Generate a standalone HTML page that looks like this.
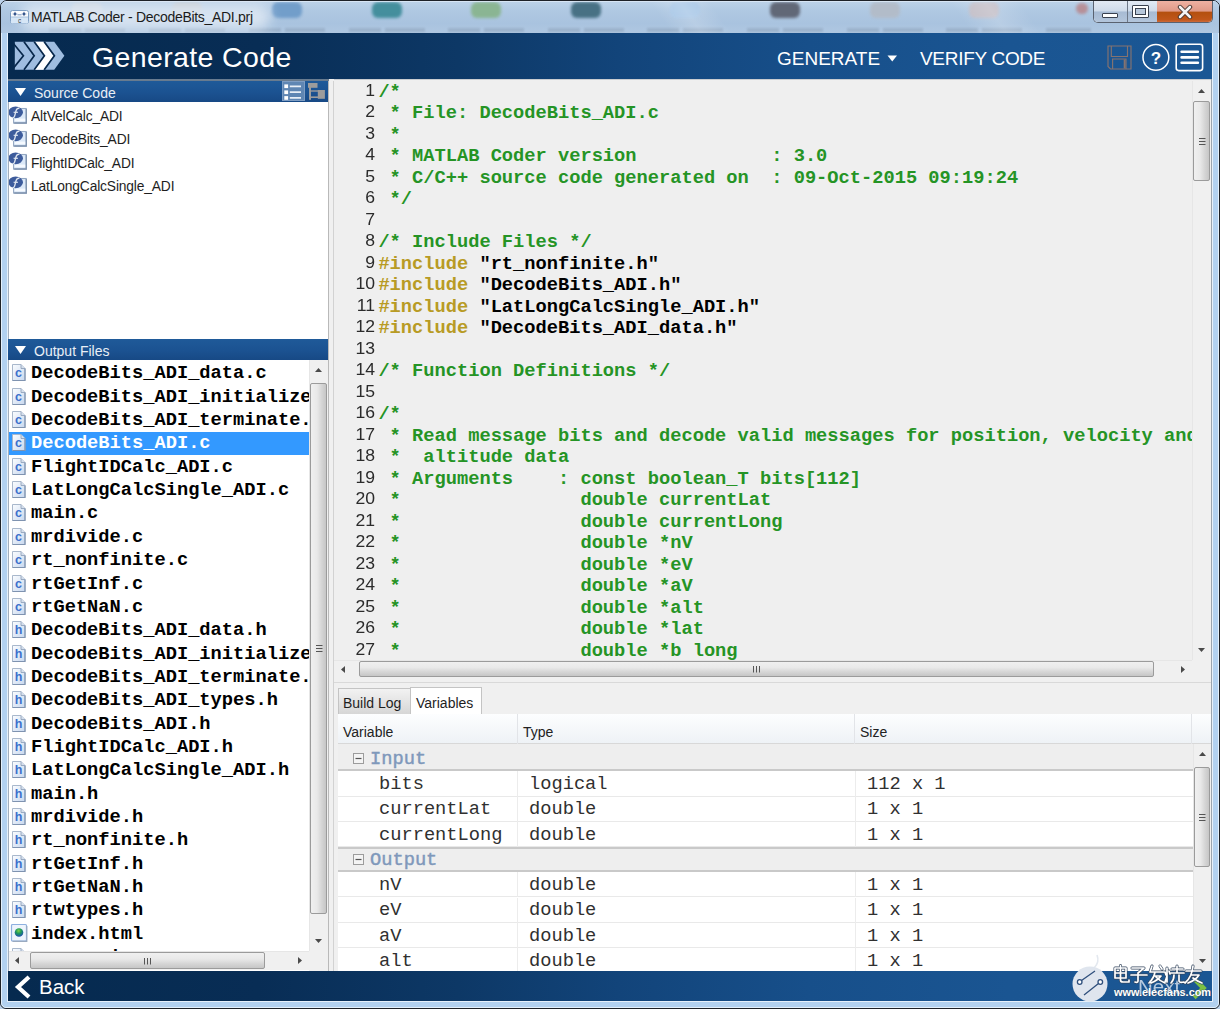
<!DOCTYPE html><html><head><meta charset="utf-8"><style>
*{margin:0;padding:0;box-sizing:border-box}
html,body{width:1220px;height:1009px;overflow:hidden;background:#bcd2ea;font-family:"Liberation Sans",sans-serif}
.a{position:absolute}
.t{position:absolute;white-space:pre;line-height:1}
.m{font-family:"Liberation Mono",monospace}
.b{font-weight:bold}
.cm{color:#259425}
.kw{color:#b89b24}
.ln{color:#2b2b2b;font-size:16px;text-align:right;width:50px;transform:scaleX(1.1);transform-origin:100% 50%}
.fi{position:absolute;width:14px;height:18px}
</style></head><body>
<div class="a" style="left:0;top:0;width:1220px;height:1009px;background:#b2d1f0;border:1px solid #1d2127;border-radius:7px 7px 6px 6px"></div>
<div class="a" style="left:1px;top:1px;width:1218px;height:1007px;border:1px solid #e3f0fc;border-radius:6px 6px 5px 5px"></div>
<div class="a" style="left:1px;top:1px;width:1218px;height:32px;border-radius:6px 6px 0 0;background:linear-gradient(to bottom,#bcd2e8 0,#afc8e2 10px,#a9c3df 22px,#afc7e1 32px)"></div>
<div class="a" style="left:7px;top:33px;width:1206px;height:969px;border:1px solid #e6f0fa"></div>
<div class="a" style="left:72px;top:2px;width:30px;height:16px;border-radius:6px;background:#c9d3de;opacity:.95;filter:blur(1.5px)"></div>
<div class="a" style="left:49px;top:28px;width:32px;height:3.5px;background:#8397ae;opacity:.4;filter:blur(1px)"></div>
<div class="a" style="left:85px;top:28px;width:40px;height:3.5px;background:#8397ae;opacity:.4;filter:blur(1px)"></div>
<div class="a" style="left:172px;top:2px;width:30px;height:16px;border-radius:6px;background:#c3c9cf;opacity:.95;filter:blur(1.5px)"></div>
<div class="a" style="left:149px;top:28px;width:32px;height:3.5px;background:#8397ae;opacity:.4;filter:blur(1px)"></div>
<div class="a" style="left:185px;top:28px;width:40px;height:3.5px;background:#8397ae;opacity:.4;filter:blur(1px)"></div>
<div class="a" style="left:272px;top:2px;width:30px;height:16px;border-radius:6px;background:#6f9cc9;opacity:.95;filter:blur(1.5px)"></div>
<div class="a" style="left:249px;top:28px;width:32px;height:3.5px;background:#8397ae;opacity:.4;filter:blur(1px)"></div>
<div class="a" style="left:285px;top:28px;width:40px;height:3.5px;background:#8397ae;opacity:.4;filter:blur(1px)"></div>
<div class="a" style="left:372px;top:2px;width:30px;height:16px;border-radius:6px;background:#3f8c9a;opacity:.95;filter:blur(1.5px)"></div>
<div class="a" style="left:349px;top:28px;width:32px;height:3.5px;background:#8397ae;opacity:.4;filter:blur(1px)"></div>
<div class="a" style="left:385px;top:28px;width:40px;height:3.5px;background:#8397ae;opacity:.4;filter:blur(1px)"></div>
<div class="a" style="left:471px;top:2px;width:30px;height:16px;border-radius:6px;background:#89b58f;opacity:.95;filter:blur(1.5px)"></div>
<div class="a" style="left:448px;top:28px;width:32px;height:3.5px;background:#8397ae;opacity:.4;filter:blur(1px)"></div>
<div class="a" style="left:484px;top:28px;width:40px;height:3.5px;background:#8397ae;opacity:.4;filter:blur(1px)"></div>
<div class="a" style="left:571px;top:2px;width:30px;height:16px;border-radius:6px;background:#436d80;opacity:.95;filter:blur(1.5px)"></div>
<div class="a" style="left:548px;top:28px;width:32px;height:3.5px;background:#8397ae;opacity:.4;filter:blur(1px)"></div>
<div class="a" style="left:584px;top:28px;width:40px;height:3.5px;background:#8397ae;opacity:.4;filter:blur(1px)"></div>
<div class="a" style="left:670px;top:2px;width:30px;height:16px;border-radius:6px;background:#a9c8e8;opacity:.95;filter:blur(1.5px)"></div>
<div class="a" style="left:647px;top:28px;width:32px;height:3.5px;background:#8397ae;opacity:.4;filter:blur(1px)"></div>
<div class="a" style="left:683px;top:28px;width:40px;height:3.5px;background:#8397ae;opacity:.4;filter:blur(1px)"></div>
<div class="a" style="left:770px;top:2px;width:30px;height:16px;border-radius:6px;background:#5d6372;opacity:.95;filter:blur(1.5px)"></div>
<div class="a" style="left:747px;top:28px;width:32px;height:3.5px;background:#8397ae;opacity:.4;filter:blur(1px)"></div>
<div class="a" style="left:783px;top:28px;width:40px;height:3.5px;background:#8397ae;opacity:.4;filter:blur(1px)"></div>
<div class="a" style="left:870px;top:2px;width:30px;height:16px;border-radius:6px;background:#b3bcc8;opacity:.95;filter:blur(1.5px)"></div>
<div class="a" style="left:847px;top:28px;width:32px;height:3.5px;background:#8397ae;opacity:.4;filter:blur(1px)"></div>
<div class="a" style="left:883px;top:28px;width:40px;height:3.5px;background:#8397ae;opacity:.4;filter:blur(1px)"></div>
<div class="a" style="left:969px;top:2px;width:30px;height:16px;border-radius:6px;background:#c4bec6;opacity:.95;filter:blur(1.5px)"></div>
<div class="a" style="left:946px;top:28px;width:32px;height:3.5px;background:#8397ae;opacity:.4;filter:blur(1px)"></div>
<div class="a" style="left:982px;top:28px;width:40px;height:3.5px;background:#8397ae;opacity:.4;filter:blur(1px)"></div>
<div class="a" style="left:660px;top:0;width:60px;height:33px;background:linear-gradient(to right,rgba(255,255,255,0),rgba(255,255,255,.18),rgba(255,255,255,0));transform:skewX(35deg)"></div>
<div class="a" style="left:960px;top:0;width:70px;height:33px;background:linear-gradient(to right,rgba(255,255,255,0),rgba(255,255,255,.18),rgba(255,255,255,0));transform:skewX(35deg)"></div>
<div class="a" style="left:20px;top:4px;width:250px;height:26px;border-radius:13px;background:#e2ebf5;opacity:.8;filter:blur(6px)"></div>
<div class="a" style="left:6px;top:0;width:1208px;height:1px;background:#1d2127"></div>
<div class="a" style="left:6px;top:1px;width:1208px;height:1px;background:#dfeaf6;opacity:.8"></div>
<div class="a" style="left:1076px;top:3px;width:12px;height:11px;border-radius:6px;background:#b88286;opacity:.8;filter:blur(1.5px)"></div>
<div class="a" style="left:1046px;top:28px;width:45px;height:3.5px;background:#8397ae;opacity:.4;filter:blur(1px)"></div>
<svg class="a" style="left:10px;top:10px" width="19" height="14" viewBox="0 0 19 14">
<rect x="0.5" y="0.5" width="18" height="13" rx="2" fill="#fbfcfe" stroke="#7d9ec4"/>
<rect x="1" y="7" width="17" height="6.5" rx="1" fill="#d6e6f6"/>
<path d="M1 7 H18" stroke="#9ab5d4" stroke-width="0.8"/>
<path d="M5 1.6 L5.9 3.4 L7.8 3.9 L5.9 4.4 L5 6.2 L4.1 4.4 L2.2 3.9 L4.1 3.4Z M14 1.6 L14.9 3.4 L16.8 3.9 L14.9 4.4 L14 6.2 L13.1 4.4 L11.2 3.9 L13.1 3.4Z" fill="#1f4380"/>
<path d="M7.5 4.8 H11.5" stroke="#5a7fb0" stroke-width="0.8"/>
<text x="9.5" y="12.6" font-size="6.5" font-family="Liberation Sans" text-anchor="middle" fill="#3a3a3a">c</text>
</svg>
<div class="t" style="left:31px;top:10px;font-size:14px;color:#1b1b1b;letter-spacing:-0.3px">MATLAB Coder - DecodeBits_ADI.prj</div>
<div class="a" style="left:1093px;top:1px;width:120px;height:22px;border:1px solid #5a6270;border-top:none;border-radius:0 0 5px 5px;overflow:hidden;background:#fff">
<div class="a" style="left:0;top:0;width:33px;height:22px;background:linear-gradient(to bottom,#e2eaf4 0,#cfdbea 45%,#a7bbd4 50%,#b4c6dc 100%)"></div>
<div class="a" style="left:33px;top:0;width:1px;height:22px;background:#6d7888"></div>
<div class="a" style="left:34px;top:0;width:29px;height:22px;background:linear-gradient(to bottom,#e2eaf4 0,#cfdbea 45%,#a7bbd4 50%,#b4c6dc 100%)"></div>
<div class="a" style="left:63px;top:0;width:56px;height:22px;background:linear-gradient(to bottom,#eeb1a2 0,#e09a88 45%,#b4500f 52%,#c0561a 85%,#d2744a 100%)"></div>
</div>
<div class="a" style="left:1102px;top:13px;width:16px;height:5px;background:#fff;border:1px solid #3a4250;border-radius:1px"></div>
<div class="a" style="left:1132px;top:5px;width:17px;height:13px;background:#fff;border:1px solid #3a4250;border-radius:1px"></div>
<div class="a" style="left:1135px;top:8px;width:11px;height:7px;background:#b7c7da;border:1px solid #3a4250"></div>
<svg class="a" style="left:1176px;top:4px" width="18" height="16" viewBox="0 0 18 16">
<path d="M4 3 L14 13 M14 3 L4 13" stroke="#40302c" stroke-width="4.4" stroke-linecap="round"/>
<path d="M4 3 L14 13 M14 3 L4 13" stroke="#f4f4f4" stroke-width="2.6" stroke-linecap="round"/>
</svg>
<div class="a" style="left:8px;top:33px;width:1204px;height:46px;background:linear-gradient(to right,#062a4f 0,#082d55 250px,#0d3866 450px,#12447a 610px,#174f8a 800px,#1a5592 1000px,#1b5794 1204px)"></div>
<div class="a" style="left:8px;top:79px;width:321px;height:2px;background:#687b8f"></div>
<svg class="a" style="left:14px;top:41px" width="52" height="30" viewBox="0 0 52 30">
<g transform="translate(0.8,0.8)">
<polygon points="0,0 39.4,0 49.6,14 39.4,28 0,28" fill="#9fbde0"/>
<polygon points="19.8,0 28.6,0 38.8,14 28.6,28 19.8,28 30,14" fill="#ffffff"/>
<g fill="none" stroke="#08284b" stroke-width="1.7">
<polyline points="-2,1 8.6,14 -2,27"/>
<polyline points="9.2,0 19.4,14 9.2,28"/>
<polyline points="19.4,0 29.6,14 19.4,28"/>
<polyline points="29.4,0 39.6,14 29.4,28"/>
</g>
</g></svg>
<div class="t" style="left:92px;top:43px;font-size:28.5px;color:#fff;letter-spacing:0.37px">Generate Code</div>
<div class="t" style="left:777px;top:49px;font-size:19px;color:#fff">GENERATE</div>
<svg class="a" style="left:887px;top:55px" width="11" height="7"><polygon points="0.5,0.5 10,0.5 5.25,6.5" fill="#fff"/></svg>
<div class="t" style="left:920px;top:49px;font-size:19px;color:#fff;letter-spacing:-0.3px">VERIFY CODE</div>
<svg class="a" style="left:1107px;top:45px" width="26" height="26" viewBox="0 0 26 26">
<g fill="none" stroke="#857370" stroke-width="1.15">
<path d="M1 1 H24 V24 H3.5 L1 21.5 Z"/>
<path d="M4.3 1 V11.5 H20.5 V1"/>
<path d="M5.6 24 V14 H19 V24"/>
</g>
<path d="M17.6 14.5 V23.5" stroke="#857370" stroke-width="1.8"/>
</svg>
<svg class="a" style="left:1141px;top:43px" width="29" height="29" viewBox="0 0 29 29">
<circle cx="14.9" cy="14.4" r="12.9" fill="none" stroke="#fff" stroke-width="1.5"/>
<text x="14.9" y="21" font-size="17" font-weight="bold" font-family="Liberation Sans" text-anchor="middle" fill="#fff">?</text>
</svg>
<svg class="a" style="left:1175px;top:43px" width="30" height="30" viewBox="0 0 30 30">
<rect x="1.2" y="1.2" width="26.4" height="26.4" rx="2.5" fill="none" stroke="#fff" stroke-width="1.6"/>
<path d="M6.6 8.7 H22.9 M6.6 14.4 H22.9 M6.6 19.8 H22.9" stroke="#fff" stroke-width="2.6" stroke-linecap="round"/>
</svg>
<div class="a" style="left:8px;top:81px;width:321px;height:21px;background:linear-gradient(to bottom,#1f5a99 0,#1b5291 55%,#174985 100%)"></div>
<svg class="a" style="left:15px;top:88px" width="12" height="9"><polygon points="0,0 11,0 5.5,8" fill="#fff"/></svg>
<div class="t" style="left:34px;top:85.6px;font-size:14px;color:#e9eff6">Source Code</div>
<div class="a" style="left:282px;top:81px;width:23px;height:20px;background:#5f86b3;border:1px solid #7d9cc2"></div>
<svg class="a" style="left:282px;top:81px" width="46" height="21" viewBox="0 0 46 21">
<g fill="#fff"><rect x="2.3" y="3.4" width="3.8" height="3.7"/><rect x="2.3" y="9.4" width="3.8" height="3.7"/><rect x="2.3" y="15.1" width="3.8" height="3.7"/></g>
<path d="M7.8 5.3 H19 M7.8 11.1 H19 M7.8 16.9 H19" stroke="#e8eef6" stroke-width="1.8"/>
<g fill="#9c9c9c"><rect x="26" y="2" width="9.5" height="4.8"/><rect x="27" y="2" width="2" height="16.8"/><rect x="29" y="9.3" width="7" height="1.4"/><rect x="29" y="15.4" width="7" height="1.6"/><rect x="35.8" y="9" width="7.1" height="8.8"/></g>
</svg>
<div class="a" style="left:8px;top:102px;width:321px;height:237px;background:#fff"></div>
<svg class="a" style="left:7px;top:106.0px" width="21" height="19" viewBox="0 0 21 19">
<rect x="6.6" y="2.5" width="12.6" height="14.6" fill="#dce9f8" stroke="#93a7c2" stroke-width="1.1"/>
<path d="M7.2 17 H19.3 V3" fill="none" stroke="#7f93ae" stroke-width="1.3"/>
<rect x="7.6" y="12.6" width="10.6" height="2.6" fill="#f6faff"/>
<ellipse cx="8.6" cy="6.35" rx="7.4" ry="5.8" fill="#3d5c9c"/>
<path d="M12.4 2.3 C10.6 1.9 9.6 2.8 9.2 4.2 L7.6 10.2 C7.3 11.4 6.6 11.8 5.4 11.6" stroke="#dfe6f0" stroke-width="1.35" fill="none"/>
<path d="M6.6 6.3 H10.9" stroke="#dfe6f0" stroke-width="1.2"/>
</svg>
<div class="t" style="left:31px;top:110.2px;font-size:13.8px;color:#1e1e1e;letter-spacing:-0.15px">AltVelCalc_ADI</div>
<svg class="a" style="left:7px;top:129.2px" width="21" height="19" viewBox="0 0 21 19">
<rect x="6.6" y="2.5" width="12.6" height="14.6" fill="#dce9f8" stroke="#93a7c2" stroke-width="1.1"/>
<path d="M7.2 17 H19.3 V3" fill="none" stroke="#7f93ae" stroke-width="1.3"/>
<rect x="7.6" y="12.6" width="10.6" height="2.6" fill="#f6faff"/>
<ellipse cx="8.6" cy="6.35" rx="7.4" ry="5.8" fill="#3d5c9c"/>
<path d="M12.4 2.3 C10.6 1.9 9.6 2.8 9.2 4.2 L7.6 10.2 C7.3 11.4 6.6 11.8 5.4 11.6" stroke="#dfe6f0" stroke-width="1.35" fill="none"/>
<path d="M6.6 6.3 H10.9" stroke="#dfe6f0" stroke-width="1.2"/>
</svg>
<div class="t" style="left:31px;top:133.4px;font-size:13.8px;color:#1e1e1e;letter-spacing:-0.15px">DecodeBits_ADI</div>
<svg class="a" style="left:7px;top:152.4px" width="21" height="19" viewBox="0 0 21 19">
<rect x="6.6" y="2.5" width="12.6" height="14.6" fill="#dce9f8" stroke="#93a7c2" stroke-width="1.1"/>
<path d="M7.2 17 H19.3 V3" fill="none" stroke="#7f93ae" stroke-width="1.3"/>
<rect x="7.6" y="12.6" width="10.6" height="2.6" fill="#f6faff"/>
<ellipse cx="8.6" cy="6.35" rx="7.4" ry="5.8" fill="#3d5c9c"/>
<path d="M12.4 2.3 C10.6 1.9 9.6 2.8 9.2 4.2 L7.6 10.2 C7.3 11.4 6.6 11.8 5.4 11.6" stroke="#dfe6f0" stroke-width="1.35" fill="none"/>
<path d="M6.6 6.3 H10.9" stroke="#dfe6f0" stroke-width="1.2"/>
</svg>
<div class="t" style="left:31px;top:156.6px;font-size:13.8px;color:#1e1e1e;letter-spacing:-0.15px">FlightIDCalc_ADI</div>
<svg class="a" style="left:7px;top:175.6px" width="21" height="19" viewBox="0 0 21 19">
<rect x="6.6" y="2.5" width="12.6" height="14.6" fill="#dce9f8" stroke="#93a7c2" stroke-width="1.1"/>
<path d="M7.2 17 H19.3 V3" fill="none" stroke="#7f93ae" stroke-width="1.3"/>
<rect x="7.6" y="12.6" width="10.6" height="2.6" fill="#f6faff"/>
<ellipse cx="8.6" cy="6.35" rx="7.4" ry="5.8" fill="#3d5c9c"/>
<path d="M12.4 2.3 C10.6 1.9 9.6 2.8 9.2 4.2 L7.6 10.2 C7.3 11.4 6.6 11.8 5.4 11.6" stroke="#dfe6f0" stroke-width="1.35" fill="none"/>
<path d="M6.6 6.3 H10.9" stroke="#dfe6f0" stroke-width="1.2"/>
</svg>
<div class="t" style="left:31px;top:179.8px;font-size:13.8px;color:#1e1e1e;letter-spacing:-0.15px">LatLongCalcSingle_ADI</div>
<div class="a" style="left:8px;top:339px;width:321px;height:21px;background:linear-gradient(to bottom,#1f5a99 0,#1b5291 55%,#174985 100%)"></div>
<svg class="a" style="left:15px;top:346px" width="12" height="9"><polygon points="0,0 11,0 5.5,8" fill="#fff"/></svg>
<div class="t" style="left:34px;top:343.6px;font-size:14px;color:#e9eff6">Output Files</div>
<div class="a" style="left:8px;top:360px;width:321px;height:611px;background:#fff"></div>
<div class="a" style="left:8px;top:360px;width:301px;height:591px;overflow:hidden">
<svg class="a" style="left:3px;top:3.3px" width="16" height="19" viewBox="0 0 16 19">
<defs><linearGradient id="pg0" x1="0" y1="0" x2="1" y2="1"><stop offset="0" stop-color="#fbfdff"/><stop offset="1" stop-color="#c8d8ef"/></linearGradient></defs>
<path d="M1.5 1.5 H10 L14 5.5 V17.5 H1.5 Z" fill="url(#pg0)" stroke="#a9b8cc" stroke-width="1"/>
<path d="M1.5 17.5 H14 V5.5" fill="none" stroke="#7f93b0" stroke-width="1.2"/>
<path d="M10 1.5 V5.5 H14" fill="#d5dfec" stroke="#8a9cb6" stroke-width="0.8"/>
<text x="7.6" y="13.6" font-size="12.5" font-weight="bold" font-family="Liberation Sans" text-anchor="middle" fill="#3d70cc">c</text></svg>
<div class="t m b" style="left:23px;top:4.3px;font-size:18.72px;color:#000">DecodeBits_ADI_data.c</div>
<svg class="a" style="left:3px;top:26.7px" width="16" height="19" viewBox="0 0 16 19">
<defs><linearGradient id="pg1" x1="0" y1="0" x2="1" y2="1"><stop offset="0" stop-color="#fbfdff"/><stop offset="1" stop-color="#c8d8ef"/></linearGradient></defs>
<path d="M1.5 1.5 H10 L14 5.5 V17.5 H1.5 Z" fill="url(#pg1)" stroke="#a9b8cc" stroke-width="1"/>
<path d="M1.5 17.5 H14 V5.5" fill="none" stroke="#7f93b0" stroke-width="1.2"/>
<path d="M10 1.5 V5.5 H14" fill="#d5dfec" stroke="#8a9cb6" stroke-width="0.8"/>
<text x="7.6" y="13.6" font-size="12.5" font-weight="bold" font-family="Liberation Sans" text-anchor="middle" fill="#3d70cc">c</text></svg>
<div class="t m b" style="left:23px;top:27.7px;font-size:18.72px;color:#000">DecodeBits_ADI_initialize.c</div>
<svg class="a" style="left:3px;top:50.0px" width="16" height="19" viewBox="0 0 16 19">
<defs><linearGradient id="pg2" x1="0" y1="0" x2="1" y2="1"><stop offset="0" stop-color="#fbfdff"/><stop offset="1" stop-color="#c8d8ef"/></linearGradient></defs>
<path d="M1.5 1.5 H10 L14 5.5 V17.5 H1.5 Z" fill="url(#pg2)" stroke="#a9b8cc" stroke-width="1"/>
<path d="M1.5 17.5 H14 V5.5" fill="none" stroke="#7f93b0" stroke-width="1.2"/>
<path d="M10 1.5 V5.5 H14" fill="#d5dfec" stroke="#8a9cb6" stroke-width="0.8"/>
<text x="7.6" y="13.6" font-size="12.5" font-weight="bold" font-family="Liberation Sans" text-anchor="middle" fill="#3d70cc">c</text></svg>
<div class="t m b" style="left:23px;top:51.0px;font-size:18.72px;color:#000">DecodeBits_ADI_terminate.c</div>
<div class="a" style="left:0;top:72.4px;width:301px;height:22.6px;background:#3399ff"></div>
<svg class="a" style="left:3px;top:73.4px" width="16" height="19" viewBox="0 0 16 19">
<defs><linearGradient id="pg3" x1="0" y1="0" x2="1" y2="1"><stop offset="0" stop-color="#fbfdff"/><stop offset="1" stop-color="#c8d8ef"/></linearGradient></defs>
<path d="M1.5 1.5 H10 L14 5.5 V17.5 H1.5 Z" fill="url(#pg3)" stroke="#a9b8cc" stroke-width="1"/>
<path d="M1.5 17.5 H14 V5.5" fill="none" stroke="#7f93b0" stroke-width="1.2"/>
<path d="M10 1.5 V5.5 H14" fill="#d5dfec" stroke="#8a9cb6" stroke-width="0.8"/>
<text x="7.6" y="13.6" font-size="12.5" font-weight="bold" font-family="Liberation Sans" text-anchor="middle" fill="#3d70cc">c</text></svg>
<div class="t m b" style="left:23px;top:74.4px;font-size:18.72px;color:#fff">DecodeBits_ADI.c</div>
<svg class="a" style="left:3px;top:96.7px" width="16" height="19" viewBox="0 0 16 19">
<defs><linearGradient id="pg4" x1="0" y1="0" x2="1" y2="1"><stop offset="0" stop-color="#fbfdff"/><stop offset="1" stop-color="#c8d8ef"/></linearGradient></defs>
<path d="M1.5 1.5 H10 L14 5.5 V17.5 H1.5 Z" fill="url(#pg4)" stroke="#a9b8cc" stroke-width="1"/>
<path d="M1.5 17.5 H14 V5.5" fill="none" stroke="#7f93b0" stroke-width="1.2"/>
<path d="M10 1.5 V5.5 H14" fill="#d5dfec" stroke="#8a9cb6" stroke-width="0.8"/>
<text x="7.6" y="13.6" font-size="12.5" font-weight="bold" font-family="Liberation Sans" text-anchor="middle" fill="#3d70cc">c</text></svg>
<div class="t m b" style="left:23px;top:97.7px;font-size:18.72px;color:#000">FlightIDCalc_ADI.c</div>
<svg class="a" style="left:3px;top:120.1px" width="16" height="19" viewBox="0 0 16 19">
<defs><linearGradient id="pg5" x1="0" y1="0" x2="1" y2="1"><stop offset="0" stop-color="#fbfdff"/><stop offset="1" stop-color="#c8d8ef"/></linearGradient></defs>
<path d="M1.5 1.5 H10 L14 5.5 V17.5 H1.5 Z" fill="url(#pg5)" stroke="#a9b8cc" stroke-width="1"/>
<path d="M1.5 17.5 H14 V5.5" fill="none" stroke="#7f93b0" stroke-width="1.2"/>
<path d="M10 1.5 V5.5 H14" fill="#d5dfec" stroke="#8a9cb6" stroke-width="0.8"/>
<text x="7.6" y="13.6" font-size="12.5" font-weight="bold" font-family="Liberation Sans" text-anchor="middle" fill="#3d70cc">c</text></svg>
<div class="t m b" style="left:23px;top:121.1px;font-size:18.72px;color:#000">LatLongCalcSingle_ADI.c</div>
<svg class="a" style="left:3px;top:143.4px" width="16" height="19" viewBox="0 0 16 19">
<defs><linearGradient id="pg6" x1="0" y1="0" x2="1" y2="1"><stop offset="0" stop-color="#fbfdff"/><stop offset="1" stop-color="#c8d8ef"/></linearGradient></defs>
<path d="M1.5 1.5 H10 L14 5.5 V17.5 H1.5 Z" fill="url(#pg6)" stroke="#a9b8cc" stroke-width="1"/>
<path d="M1.5 17.5 H14 V5.5" fill="none" stroke="#7f93b0" stroke-width="1.2"/>
<path d="M10 1.5 V5.5 H14" fill="#d5dfec" stroke="#8a9cb6" stroke-width="0.8"/>
<text x="7.6" y="13.6" font-size="12.5" font-weight="bold" font-family="Liberation Sans" text-anchor="middle" fill="#3d70cc">c</text></svg>
<div class="t m b" style="left:23px;top:144.4px;font-size:18.72px;color:#000">main.c</div>
<svg class="a" style="left:3px;top:166.8px" width="16" height="19" viewBox="0 0 16 19">
<defs><linearGradient id="pg7" x1="0" y1="0" x2="1" y2="1"><stop offset="0" stop-color="#fbfdff"/><stop offset="1" stop-color="#c8d8ef"/></linearGradient></defs>
<path d="M1.5 1.5 H10 L14 5.5 V17.5 H1.5 Z" fill="url(#pg7)" stroke="#a9b8cc" stroke-width="1"/>
<path d="M1.5 17.5 H14 V5.5" fill="none" stroke="#7f93b0" stroke-width="1.2"/>
<path d="M10 1.5 V5.5 H14" fill="#d5dfec" stroke="#8a9cb6" stroke-width="0.8"/>
<text x="7.6" y="13.6" font-size="12.5" font-weight="bold" font-family="Liberation Sans" text-anchor="middle" fill="#3d70cc">c</text></svg>
<div class="t m b" style="left:23px;top:167.8px;font-size:18.72px;color:#000">mrdivide.c</div>
<svg class="a" style="left:3px;top:190.1px" width="16" height="19" viewBox="0 0 16 19">
<defs><linearGradient id="pg8" x1="0" y1="0" x2="1" y2="1"><stop offset="0" stop-color="#fbfdff"/><stop offset="1" stop-color="#c8d8ef"/></linearGradient></defs>
<path d="M1.5 1.5 H10 L14 5.5 V17.5 H1.5 Z" fill="url(#pg8)" stroke="#a9b8cc" stroke-width="1"/>
<path d="M1.5 17.5 H14 V5.5" fill="none" stroke="#7f93b0" stroke-width="1.2"/>
<path d="M10 1.5 V5.5 H14" fill="#d5dfec" stroke="#8a9cb6" stroke-width="0.8"/>
<text x="7.6" y="13.6" font-size="12.5" font-weight="bold" font-family="Liberation Sans" text-anchor="middle" fill="#3d70cc">c</text></svg>
<div class="t m b" style="left:23px;top:191.1px;font-size:18.72px;color:#000">rt_nonfinite.c</div>
<svg class="a" style="left:3px;top:213.5px" width="16" height="19" viewBox="0 0 16 19">
<defs><linearGradient id="pg9" x1="0" y1="0" x2="1" y2="1"><stop offset="0" stop-color="#fbfdff"/><stop offset="1" stop-color="#c8d8ef"/></linearGradient></defs>
<path d="M1.5 1.5 H10 L14 5.5 V17.5 H1.5 Z" fill="url(#pg9)" stroke="#a9b8cc" stroke-width="1"/>
<path d="M1.5 17.5 H14 V5.5" fill="none" stroke="#7f93b0" stroke-width="1.2"/>
<path d="M10 1.5 V5.5 H14" fill="#d5dfec" stroke="#8a9cb6" stroke-width="0.8"/>
<text x="7.6" y="13.6" font-size="12.5" font-weight="bold" font-family="Liberation Sans" text-anchor="middle" fill="#3d70cc">c</text></svg>
<div class="t m b" style="left:23px;top:214.5px;font-size:18.72px;color:#000">rtGetInf.c</div>
<svg class="a" style="left:3px;top:236.8px" width="16" height="19" viewBox="0 0 16 19">
<defs><linearGradient id="pg10" x1="0" y1="0" x2="1" y2="1"><stop offset="0" stop-color="#fbfdff"/><stop offset="1" stop-color="#c8d8ef"/></linearGradient></defs>
<path d="M1.5 1.5 H10 L14 5.5 V17.5 H1.5 Z" fill="url(#pg10)" stroke="#a9b8cc" stroke-width="1"/>
<path d="M1.5 17.5 H14 V5.5" fill="none" stroke="#7f93b0" stroke-width="1.2"/>
<path d="M10 1.5 V5.5 H14" fill="#d5dfec" stroke="#8a9cb6" stroke-width="0.8"/>
<text x="7.6" y="13.6" font-size="12.5" font-weight="bold" font-family="Liberation Sans" text-anchor="middle" fill="#3d70cc">c</text></svg>
<div class="t m b" style="left:23px;top:237.8px;font-size:18.72px;color:#000">rtGetNaN.c</div>
<svg class="a" style="left:3px;top:260.2px" width="16" height="19" viewBox="0 0 16 19">
<defs><linearGradient id="pg11" x1="0" y1="0" x2="1" y2="1"><stop offset="0" stop-color="#fbfdff"/><stop offset="1" stop-color="#c8d8ef"/></linearGradient></defs>
<path d="M1.5 1.5 H10 L14 5.5 V17.5 H1.5 Z" fill="url(#pg11)" stroke="#a9b8cc" stroke-width="1"/>
<path d="M1.5 17.5 H14 V5.5" fill="none" stroke="#7f93b0" stroke-width="1.2"/>
<path d="M10 1.5 V5.5 H14" fill="#d5dfec" stroke="#8a9cb6" stroke-width="0.8"/>
<text x="7.6" y="13.6" font-size="12.5" font-weight="bold" font-family="Liberation Sans" text-anchor="middle" fill="#3d70cc">h</text></svg>
<div class="t m b" style="left:23px;top:261.2px;font-size:18.72px;color:#000">DecodeBits_ADI_data.h</div>
<svg class="a" style="left:3px;top:283.5px" width="16" height="19" viewBox="0 0 16 19">
<defs><linearGradient id="pg12" x1="0" y1="0" x2="1" y2="1"><stop offset="0" stop-color="#fbfdff"/><stop offset="1" stop-color="#c8d8ef"/></linearGradient></defs>
<path d="M1.5 1.5 H10 L14 5.5 V17.5 H1.5 Z" fill="url(#pg12)" stroke="#a9b8cc" stroke-width="1"/>
<path d="M1.5 17.5 H14 V5.5" fill="none" stroke="#7f93b0" stroke-width="1.2"/>
<path d="M10 1.5 V5.5 H14" fill="#d5dfec" stroke="#8a9cb6" stroke-width="0.8"/>
<text x="7.6" y="13.6" font-size="12.5" font-weight="bold" font-family="Liberation Sans" text-anchor="middle" fill="#3d70cc">h</text></svg>
<div class="t m b" style="left:23px;top:284.5px;font-size:18.72px;color:#000">DecodeBits_ADI_initialize.h</div>
<svg class="a" style="left:3px;top:306.9px" width="16" height="19" viewBox="0 0 16 19">
<defs><linearGradient id="pg13" x1="0" y1="0" x2="1" y2="1"><stop offset="0" stop-color="#fbfdff"/><stop offset="1" stop-color="#c8d8ef"/></linearGradient></defs>
<path d="M1.5 1.5 H10 L14 5.5 V17.5 H1.5 Z" fill="url(#pg13)" stroke="#a9b8cc" stroke-width="1"/>
<path d="M1.5 17.5 H14 V5.5" fill="none" stroke="#7f93b0" stroke-width="1.2"/>
<path d="M10 1.5 V5.5 H14" fill="#d5dfec" stroke="#8a9cb6" stroke-width="0.8"/>
<text x="7.6" y="13.6" font-size="12.5" font-weight="bold" font-family="Liberation Sans" text-anchor="middle" fill="#3d70cc">h</text></svg>
<div class="t m b" style="left:23px;top:307.9px;font-size:18.72px;color:#000">DecodeBits_ADI_terminate.h</div>
<svg class="a" style="left:3px;top:330.2px" width="16" height="19" viewBox="0 0 16 19">
<defs><linearGradient id="pg14" x1="0" y1="0" x2="1" y2="1"><stop offset="0" stop-color="#fbfdff"/><stop offset="1" stop-color="#c8d8ef"/></linearGradient></defs>
<path d="M1.5 1.5 H10 L14 5.5 V17.5 H1.5 Z" fill="url(#pg14)" stroke="#a9b8cc" stroke-width="1"/>
<path d="M1.5 17.5 H14 V5.5" fill="none" stroke="#7f93b0" stroke-width="1.2"/>
<path d="M10 1.5 V5.5 H14" fill="#d5dfec" stroke="#8a9cb6" stroke-width="0.8"/>
<text x="7.6" y="13.6" font-size="12.5" font-weight="bold" font-family="Liberation Sans" text-anchor="middle" fill="#3d70cc">h</text></svg>
<div class="t m b" style="left:23px;top:331.2px;font-size:18.72px;color:#000">DecodeBits_ADI_types.h</div>
<svg class="a" style="left:3px;top:353.5px" width="16" height="19" viewBox="0 0 16 19">
<defs><linearGradient id="pg15" x1="0" y1="0" x2="1" y2="1"><stop offset="0" stop-color="#fbfdff"/><stop offset="1" stop-color="#c8d8ef"/></linearGradient></defs>
<path d="M1.5 1.5 H10 L14 5.5 V17.5 H1.5 Z" fill="url(#pg15)" stroke="#a9b8cc" stroke-width="1"/>
<path d="M1.5 17.5 H14 V5.5" fill="none" stroke="#7f93b0" stroke-width="1.2"/>
<path d="M10 1.5 V5.5 H14" fill="#d5dfec" stroke="#8a9cb6" stroke-width="0.8"/>
<text x="7.6" y="13.6" font-size="12.5" font-weight="bold" font-family="Liberation Sans" text-anchor="middle" fill="#3d70cc">h</text></svg>
<div class="t m b" style="left:23px;top:354.5px;font-size:18.72px;color:#000">DecodeBits_ADI.h</div>
<svg class="a" style="left:3px;top:376.9px" width="16" height="19" viewBox="0 0 16 19">
<defs><linearGradient id="pg16" x1="0" y1="0" x2="1" y2="1"><stop offset="0" stop-color="#fbfdff"/><stop offset="1" stop-color="#c8d8ef"/></linearGradient></defs>
<path d="M1.5 1.5 H10 L14 5.5 V17.5 H1.5 Z" fill="url(#pg16)" stroke="#a9b8cc" stroke-width="1"/>
<path d="M1.5 17.5 H14 V5.5" fill="none" stroke="#7f93b0" stroke-width="1.2"/>
<path d="M10 1.5 V5.5 H14" fill="#d5dfec" stroke="#8a9cb6" stroke-width="0.8"/>
<text x="7.6" y="13.6" font-size="12.5" font-weight="bold" font-family="Liberation Sans" text-anchor="middle" fill="#3d70cc">h</text></svg>
<div class="t m b" style="left:23px;top:377.9px;font-size:18.72px;color:#000">FlightIDCalc_ADI.h</div>
<svg class="a" style="left:3px;top:400.2px" width="16" height="19" viewBox="0 0 16 19">
<defs><linearGradient id="pg17" x1="0" y1="0" x2="1" y2="1"><stop offset="0" stop-color="#fbfdff"/><stop offset="1" stop-color="#c8d8ef"/></linearGradient></defs>
<path d="M1.5 1.5 H10 L14 5.5 V17.5 H1.5 Z" fill="url(#pg17)" stroke="#a9b8cc" stroke-width="1"/>
<path d="M1.5 17.5 H14 V5.5" fill="none" stroke="#7f93b0" stroke-width="1.2"/>
<path d="M10 1.5 V5.5 H14" fill="#d5dfec" stroke="#8a9cb6" stroke-width="0.8"/>
<text x="7.6" y="13.6" font-size="12.5" font-weight="bold" font-family="Liberation Sans" text-anchor="middle" fill="#3d70cc">h</text></svg>
<div class="t m b" style="left:23px;top:401.2px;font-size:18.72px;color:#000">LatLongCalcSingle_ADI.h</div>
<svg class="a" style="left:3px;top:423.6px" width="16" height="19" viewBox="0 0 16 19">
<defs><linearGradient id="pg18" x1="0" y1="0" x2="1" y2="1"><stop offset="0" stop-color="#fbfdff"/><stop offset="1" stop-color="#c8d8ef"/></linearGradient></defs>
<path d="M1.5 1.5 H10 L14 5.5 V17.5 H1.5 Z" fill="url(#pg18)" stroke="#a9b8cc" stroke-width="1"/>
<path d="M1.5 17.5 H14 V5.5" fill="none" stroke="#7f93b0" stroke-width="1.2"/>
<path d="M10 1.5 V5.5 H14" fill="#d5dfec" stroke="#8a9cb6" stroke-width="0.8"/>
<text x="7.6" y="13.6" font-size="12.5" font-weight="bold" font-family="Liberation Sans" text-anchor="middle" fill="#3d70cc">h</text></svg>
<div class="t m b" style="left:23px;top:424.6px;font-size:18.72px;color:#000">main.h</div>
<svg class="a" style="left:3px;top:447.0px" width="16" height="19" viewBox="0 0 16 19">
<defs><linearGradient id="pg19" x1="0" y1="0" x2="1" y2="1"><stop offset="0" stop-color="#fbfdff"/><stop offset="1" stop-color="#c8d8ef"/></linearGradient></defs>
<path d="M1.5 1.5 H10 L14 5.5 V17.5 H1.5 Z" fill="url(#pg19)" stroke="#a9b8cc" stroke-width="1"/>
<path d="M1.5 17.5 H14 V5.5" fill="none" stroke="#7f93b0" stroke-width="1.2"/>
<path d="M10 1.5 V5.5 H14" fill="#d5dfec" stroke="#8a9cb6" stroke-width="0.8"/>
<text x="7.6" y="13.6" font-size="12.5" font-weight="bold" font-family="Liberation Sans" text-anchor="middle" fill="#3d70cc">h</text></svg>
<div class="t m b" style="left:23px;top:448.0px;font-size:18.72px;color:#000">mrdivide.h</div>
<svg class="a" style="left:3px;top:470.3px" width="16" height="19" viewBox="0 0 16 19">
<defs><linearGradient id="pg20" x1="0" y1="0" x2="1" y2="1"><stop offset="0" stop-color="#fbfdff"/><stop offset="1" stop-color="#c8d8ef"/></linearGradient></defs>
<path d="M1.5 1.5 H10 L14 5.5 V17.5 H1.5 Z" fill="url(#pg20)" stroke="#a9b8cc" stroke-width="1"/>
<path d="M1.5 17.5 H14 V5.5" fill="none" stroke="#7f93b0" stroke-width="1.2"/>
<path d="M10 1.5 V5.5 H14" fill="#d5dfec" stroke="#8a9cb6" stroke-width="0.8"/>
<text x="7.6" y="13.6" font-size="12.5" font-weight="bold" font-family="Liberation Sans" text-anchor="middle" fill="#3d70cc">h</text></svg>
<div class="t m b" style="left:23px;top:471.3px;font-size:18.72px;color:#000">rt_nonfinite.h</div>
<svg class="a" style="left:3px;top:493.7px" width="16" height="19" viewBox="0 0 16 19">
<defs><linearGradient id="pg21" x1="0" y1="0" x2="1" y2="1"><stop offset="0" stop-color="#fbfdff"/><stop offset="1" stop-color="#c8d8ef"/></linearGradient></defs>
<path d="M1.5 1.5 H10 L14 5.5 V17.5 H1.5 Z" fill="url(#pg21)" stroke="#a9b8cc" stroke-width="1"/>
<path d="M1.5 17.5 H14 V5.5" fill="none" stroke="#7f93b0" stroke-width="1.2"/>
<path d="M10 1.5 V5.5 H14" fill="#d5dfec" stroke="#8a9cb6" stroke-width="0.8"/>
<text x="7.6" y="13.6" font-size="12.5" font-weight="bold" font-family="Liberation Sans" text-anchor="middle" fill="#3d70cc">h</text></svg>
<div class="t m b" style="left:23px;top:494.7px;font-size:18.72px;color:#000">rtGetInf.h</div>
<svg class="a" style="left:3px;top:517.0px" width="16" height="19" viewBox="0 0 16 19">
<defs><linearGradient id="pg22" x1="0" y1="0" x2="1" y2="1"><stop offset="0" stop-color="#fbfdff"/><stop offset="1" stop-color="#c8d8ef"/></linearGradient></defs>
<path d="M1.5 1.5 H10 L14 5.5 V17.5 H1.5 Z" fill="url(#pg22)" stroke="#a9b8cc" stroke-width="1"/>
<path d="M1.5 17.5 H14 V5.5" fill="none" stroke="#7f93b0" stroke-width="1.2"/>
<path d="M10 1.5 V5.5 H14" fill="#d5dfec" stroke="#8a9cb6" stroke-width="0.8"/>
<text x="7.6" y="13.6" font-size="12.5" font-weight="bold" font-family="Liberation Sans" text-anchor="middle" fill="#3d70cc">h</text></svg>
<div class="t m b" style="left:23px;top:518.0px;font-size:18.72px;color:#000">rtGetNaN.h</div>
<svg class="a" style="left:3px;top:540.4px" width="16" height="19" viewBox="0 0 16 19">
<defs><linearGradient id="pg23" x1="0" y1="0" x2="1" y2="1"><stop offset="0" stop-color="#fbfdff"/><stop offset="1" stop-color="#c8d8ef"/></linearGradient></defs>
<path d="M1.5 1.5 H10 L14 5.5 V17.5 H1.5 Z" fill="url(#pg23)" stroke="#a9b8cc" stroke-width="1"/>
<path d="M1.5 17.5 H14 V5.5" fill="none" stroke="#7f93b0" stroke-width="1.2"/>
<path d="M10 1.5 V5.5 H14" fill="#d5dfec" stroke="#8a9cb6" stroke-width="0.8"/>
<text x="7.6" y="13.6" font-size="12.5" font-weight="bold" font-family="Liberation Sans" text-anchor="middle" fill="#3d70cc">h</text></svg>
<div class="t m b" style="left:23px;top:541.4px;font-size:18.72px;color:#000">rtwtypes.h</div>
<svg class="a" style="left:2px;top:563.2px" width="18" height="20" viewBox="0 0 18 20">
<defs><radialGradient id="gl" cx="0.45" cy="0.3" r="0.7"><stop offset="0" stop-color="#7fd04a"/><stop offset="0.45" stop-color="#1f9a5a"/><stop offset="1" stop-color="#1d4fb0"/></radialGradient></defs>
<rect x="1.5" y="1.5" width="15" height="16.5" rx="1" fill="#eef4fc" stroke="#8eb0e0" stroke-width="1.2"/>
<path d="M2.5 18.3 H16.8 V3" fill="none" stroke="#9aaac0" stroke-width="1.2"/>
<circle cx="9" cy="9.5" r="4.3" fill="url(#gl)"/>
</svg>
<div class="t m b" style="left:23px;top:564.7px;font-size:18.72px;color:#000">index.html</div>
<svg class="a" style="left:3px;top:587.0px" width="16" height="19" viewBox="0 0 16 19">
<defs><linearGradient id="pg25" x1="0" y1="0" x2="1" y2="1"><stop offset="0" stop-color="#fbfdff"/><stop offset="1" stop-color="#c8d8ef"/></linearGradient></defs>
<path d="M1.5 1.5 H10 L14 5.5 V17.5 H1.5 Z" fill="url(#pg25)" stroke="#a9b8cc" stroke-width="1"/>
<path d="M1.5 17.5 H14 V5.5" fill="none" stroke="#7f93b0" stroke-width="1.2"/>
<path d="M10 1.5 V5.5 H14" fill="#d5dfec" stroke="#8a9cb6" stroke-width="0.8"/>
<text x="7.6" y="13.6" font-size="12.5" font-weight="bold" font-family="Liberation Sans" text-anchor="middle" fill="#3d70cc">c</text></svg>
<div class="t m b" style="left:23px;top:588.0px;font-size:18.72px;color:#000">       i.c</div>
</div>
<div class="a" style="left:309px;top:360px;width:19px;height:591px;background:#f0f0f0;border-left:1px solid #e6e6e6"></div>
<svg class="a" style="left:314.0px;top:367px" width="9" height="6"><polygon points="1,5 4.5,1 8,5" fill="#4a4a4a"/></svg>
<svg class="a" style="left:314.0px;top:938px" width="9" height="6"><polygon points="1,1 8,1 4.5,5" fill="#4a4a4a"/></svg>
<div class="a" style="left:310px;top:382.5px;width:17px;height:531.5px;border:1px solid #9b9b9b;border-radius:2px;background:linear-gradient(to right,#f0f0f0 0,#e9e9e9 40%,#d6d6d6 70%,#c6c6c6 100%)"></div>
<svg class="a" style="left:314.5px;top:643.8px" width="9" height="9"><path d="M1 1.5 H7.5 M1 4.5 H7.5 M1 7.5 H7.5" stroke="#555" stroke-width="1"/></svg>
<div class="a" style="left:8px;top:951px;width:301px;height:19px;background:#f0f0f0;border-top:1px solid #e6e6e6"></div>
<svg class="a" style="left:14px;top:956.0px" width="6" height="9"><polygon points="5,1 1,4.5 5,8" fill="#4a4a4a"/></svg>
<svg class="a" style="left:297px;top:956.0px" width="6" height="9"><polygon points="1,1 5,4.5 1,8" fill="#4a4a4a"/></svg>
<div class="a" style="left:30px;top:952px;width:235px;height:17px;border:1px solid #9b9b9b;border-radius:2px;background:linear-gradient(to bottom,#f0f0f0 0,#e9e9e9 40%,#d6d6d6 70%,#c6c6c6 100%)"></div>
<svg class="a" style="left:143.0px;top:956.5px" width="9" height="9"><path d="M1.5 1 V7.5 M4.5 1 V7.5 M7.5 1 V7.5" stroke="#555" stroke-width="1"/></svg>
<div class="a" style="left:309px;top:951px;width:19px;height:20px;background:#f0f0f0"></div>
<div class="a" style="left:8px;top:102px;width:1px;height:237px;background:#a3afbd"></div>
<div class="a" style="left:8px;top:360px;width:1px;height:611px;background:#a3afbd"></div>
<div class="a" style="left:328px;top:81px;width:6px;height:890px;background:#f0f0f0;border-left:1px solid #b9b9b9;border-right:1px solid #d2d2d2"></div>
<div class="a" style="left:329px;top:79px;width:5px;height:2px;background:#f0f0f0"></div>
<div class="a" style="left:334px;top:79px;width:878px;height:604px;background:#efefef;border-top:1px solid #c9ccd0"></div>
<div class="a" style="left:334px;top:81px;width:858px;height:579px;overflow:hidden">
<div class="t ln" style="left:-9.5px;top:1.80px">1</div>
<div class="t m b" style="left:44.40px;top:2.00px;font-size:18.72px;color:#000"><span class="cm">/*</span></div>
<div class="t ln" style="left:-9.5px;top:23.29px">2</div>
<div class="t m b" style="left:44.40px;top:23.49px;font-size:18.72px;color:#000"><span class="cm"> * File: DecodeBits_ADI.c</span></div>
<div class="t ln" style="left:-9.5px;top:44.78px">3</div>
<div class="t m b" style="left:44.40px;top:44.98px;font-size:18.72px;color:#000"><span class="cm"> *</span></div>
<div class="t ln" style="left:-9.5px;top:66.27px">4</div>
<div class="t m b" style="left:44.40px;top:66.47px;font-size:18.72px;color:#000"><span class="cm"> * MATLAB Coder version            : 3.0</span></div>
<div class="t ln" style="left:-9.5px;top:87.76px">5</div>
<div class="t m b" style="left:44.40px;top:87.96px;font-size:18.72px;color:#000"><span class="cm"> * C/C++ source code generated on  : 09-Oct-2015 09:19:24</span></div>
<div class="t ln" style="left:-9.5px;top:109.25px">6</div>
<div class="t m b" style="left:44.40px;top:109.45px;font-size:18.72px;color:#000"><span class="cm"> */</span></div>
<div class="t ln" style="left:-9.5px;top:130.74px">7</div>
<div class="t ln" style="left:-9.5px;top:152.23px">8</div>
<div class="t m b" style="left:44.40px;top:152.43px;font-size:18.72px;color:#000"><span class="cm">/* Include Files */</span></div>
<div class="t ln" style="left:-9.5px;top:173.72px">9</div>
<div class="t m b" style="left:44.40px;top:173.92px;font-size:18.72px;color:#000"><span class="kw">#include</span> &quot;rt_nonfinite.h&quot;</div>
<div class="t ln" style="left:-9.5px;top:195.21px">10</div>
<div class="t m b" style="left:44.40px;top:195.41px;font-size:18.72px;color:#000"><span class="kw">#include</span> &quot;DecodeBits_ADI.h&quot;</div>
<div class="t ln" style="left:-9.5px;top:216.70px">11</div>
<div class="t m b" style="left:44.40px;top:216.90px;font-size:18.72px;color:#000"><span class="kw">#include</span> &quot;LatLongCalcSingle_ADI.h&quot;</div>
<div class="t ln" style="left:-9.5px;top:238.19px">12</div>
<div class="t m b" style="left:44.40px;top:238.39px;font-size:18.72px;color:#000"><span class="kw">#include</span> &quot;DecodeBits_ADI_data.h&quot;</div>
<div class="t ln" style="left:-9.5px;top:259.68px">13</div>
<div class="t ln" style="left:-9.5px;top:281.17px">14</div>
<div class="t m b" style="left:44.40px;top:281.37px;font-size:18.72px;color:#000"><span class="cm">/* Function Definitions */</span></div>
<div class="t ln" style="left:-9.5px;top:302.66px">15</div>
<div class="t ln" style="left:-9.5px;top:324.15px">16</div>
<div class="t m b" style="left:44.40px;top:324.35px;font-size:18.72px;color:#000"><span class="cm">/*</span></div>
<div class="t ln" style="left:-9.5px;top:345.64px">17</div>
<div class="t m b" style="left:44.40px;top:345.84px;font-size:18.72px;color:#000"><span class="cm"> * Read message bits and decode valid messages for position, velocity and</span></div>
<div class="t ln" style="left:-9.5px;top:367.13px">18</div>
<div class="t m b" style="left:44.40px;top:367.33px;font-size:18.72px;color:#000"><span class="cm"> *  altitude data</span></div>
<div class="t ln" style="left:-9.5px;top:388.62px">19</div>
<div class="t m b" style="left:44.40px;top:388.82px;font-size:18.72px;color:#000"><span class="cm"> * Arguments    : const boolean_T bits[112]</span></div>
<div class="t ln" style="left:-9.5px;top:410.11px">20</div>
<div class="t m b" style="left:44.40px;top:410.31px;font-size:18.72px;color:#000"><span class="cm"> *                double currentLat</span></div>
<div class="t ln" style="left:-9.5px;top:431.60px">21</div>
<div class="t m b" style="left:44.40px;top:431.80px;font-size:18.72px;color:#000"><span class="cm"> *                double currentLong</span></div>
<div class="t ln" style="left:-9.5px;top:453.09px">22</div>
<div class="t m b" style="left:44.40px;top:453.29px;font-size:18.72px;color:#000"><span class="cm"> *                double *nV</span></div>
<div class="t ln" style="left:-9.5px;top:474.58px">23</div>
<div class="t m b" style="left:44.40px;top:474.78px;font-size:18.72px;color:#000"><span class="cm"> *                double *eV</span></div>
<div class="t ln" style="left:-9.5px;top:496.07px">24</div>
<div class="t m b" style="left:44.40px;top:496.27px;font-size:18.72px;color:#000"><span class="cm"> *                double *aV</span></div>
<div class="t ln" style="left:-9.5px;top:517.56px">25</div>
<div class="t m b" style="left:44.40px;top:517.76px;font-size:18.72px;color:#000"><span class="cm"> *                double *alt</span></div>
<div class="t ln" style="left:-9.5px;top:539.05px">26</div>
<div class="t m b" style="left:44.40px;top:539.25px;font-size:18.72px;color:#000"><span class="cm"> *                double *lat</span></div>
<div class="t ln" style="left:-9.5px;top:560.54px">27</div>
<div class="t m b" style="left:44.40px;top:560.74px;font-size:18.72px;color:#000"><span class="cm"> *                double *b long</span></div>
</div>
<div class="a" style="left:1192px;top:81px;width:19px;height:579px;background:#f0f0f0;border-left:1px solid #e6e6e6"></div>
<svg class="a" style="left:1197.0px;top:88px" width="9" height="6"><polygon points="1,5 4.5,1 8,5" fill="#4a4a4a"/></svg>
<svg class="a" style="left:1197.0px;top:647px" width="9" height="6"><polygon points="1,1 8,1 4.5,5" fill="#4a4a4a"/></svg>
<div class="a" style="left:1193px;top:101px;width:17px;height:80px;border:1px solid #9b9b9b;border-radius:2px;background:linear-gradient(to right,#f0f0f0 0,#e9e9e9 40%,#d6d6d6 70%,#c6c6c6 100%)"></div>
<svg class="a" style="left:1197.5px;top:136.5px" width="9" height="9"><path d="M1 1.5 H7.5 M1 4.5 H7.5 M1 7.5 H7.5" stroke="#555" stroke-width="1"/></svg>
<div class="a" style="left:334px;top:660px;width:858px;height:18px;background:#f0f0f0;border-top:1px solid #e6e6e6"></div>
<svg class="a" style="left:340px;top:664.5px" width="6" height="9"><polygon points="5,1 1,4.5 5,8" fill="#4a4a4a"/></svg>
<svg class="a" style="left:1180px;top:664.5px" width="6" height="9"><polygon points="1,1 5,4.5 1,8" fill="#4a4a4a"/></svg>
<div class="a" style="left:359px;top:661px;width:795px;height:16px;border:1px solid #9b9b9b;border-radius:2px;background:linear-gradient(to bottom,#f0f0f0 0,#e9e9e9 40%,#d6d6d6 70%,#c6c6c6 100%)"></div>
<svg class="a" style="left:752.0px;top:665.0px" width="9" height="9"><path d="M1.5 1 V7.5 M4.5 1 V7.5 M7.5 1 V7.5" stroke="#555" stroke-width="1"/></svg>
<div class="a" style="left:1192px;top:660px;width:20px;height:18px;background:#f0f0f0"></div>
<div class="a" style="left:334px;top:678px;width:878px;height:36px;background:#f0f0f0"></div>
<div class="a" style="left:334px;top:682px;width:878px;height:1px;background:#d9d9d9"></div>
<div class="a" style="left:338px;top:688px;width:73px;height:27px;background:linear-gradient(to bottom,#f2f2f2 0,#e4e4e4 50%,#d5d5d5 100%);border:1px solid #c4c4c4;border-bottom:none"></div>
<div class="a" style="left:410px;top:687px;width:72px;height:28px;background:#fff;border:1px solid #c4c4c4;border-bottom:none"></div>
<div class="t" style="left:343px;top:696px;font-size:14px;color:#1e1e1e">Build Log</div>
<div class="t" style="left:416px;top:696px;font-size:14px;color:#1e1e1e">Variables</div>
<div class="a" style="left:338px;top:714px;width:874px;height:257px;background:#fff"></div>
<div class="a" style="left:338px;top:714px;width:874px;height:30px;background:linear-gradient(to bottom,#fdfeff 0,#f7f9fb 40%,#eef2f6 100%);border-bottom:1px solid #d8d8d8"></div>
<div class="a" style="left:517px;top:714px;width:1px;height:30px;background:#e2e4e8"></div>
<div class="a" style="left:854px;top:714px;width:1px;height:30px;background:#e2e4e8"></div>
<div class="a" style="left:1191px;top:714px;width:1px;height:30px;background:#e2e4e8"></div>
<div class="t" style="left:343px;top:725px;font-size:14px;color:#222">Variable</div>
<div class="t" style="left:523px;top:725px;font-size:14px;color:#222">Type</div>
<div class="t" style="left:860px;top:725px;font-size:14px;color:#222">Size</div>
<div class="a" style="left:338px;top:744px;width:855px;height:227px;overflow:hidden">
<div class="a" style="left:0;top:0.0px;width:855px;height:27.3px;background:#eeeeee;border-bottom:2px solid #c9c9c9;"></div>
<svg class="a" style="left:15px;top:9.3px" width="11" height="11"><rect x="0.5" y="0.5" width="10" height="10" fill="#f4f4f4" stroke="#9c9c9c"/><path d="M2.5 5.5 H8.5" stroke="#555" stroke-width="1.2"/></svg>
<div class="t m" style="left:32px;top:5.6px;font-size:18.72px;color:#7f98bb;-webkit-text-stroke:0.45px #7f98bb">Input</div>
<div class="a" style="left:0;top:27.3px;width:855px;height:25.3px;background:#fff;border-bottom:1px solid #e9e9e9"></div>
<div class="a" style="left:179px;top:27.3px;width:1px;height:25.3px;background:#ececec"></div>
<div class="a" style="left:517px;top:27.3px;width:1px;height:25.3px;background:#ececec"></div>
<div class="t m" style="left:41px;top:31.1px;font-size:18.72px;color:#303030">bits</div>
<div class="t m" style="left:191px;top:31.1px;font-size:18.72px;color:#303030">logical</div>
<div class="t m" style="left:529px;top:31.1px;font-size:18.72px;color:#303030">112 x 1</div>
<div class="a" style="left:0;top:52.6px;width:855px;height:25.2px;background:#fff;border-bottom:1px solid #e9e9e9"></div>
<div class="a" style="left:179px;top:52.6px;width:1px;height:25.2px;background:#ececec"></div>
<div class="a" style="left:517px;top:52.6px;width:1px;height:25.2px;background:#ececec"></div>
<div class="t m" style="left:41px;top:56.4px;font-size:18.72px;color:#303030">currentLat</div>
<div class="t m" style="left:191px;top:56.4px;font-size:18.72px;color:#303030">double</div>
<div class="t m" style="left:529px;top:56.4px;font-size:18.72px;color:#303030">1 x 1</div>
<div class="a" style="left:0;top:77.8px;width:855px;height:25.2px;background:#fff;border-bottom:1px solid #e9e9e9"></div>
<div class="a" style="left:179px;top:77.8px;width:1px;height:25.2px;background:#ececec"></div>
<div class="a" style="left:517px;top:77.8px;width:1px;height:25.2px;background:#ececec"></div>
<div class="t m" style="left:41px;top:81.6px;font-size:18.72px;color:#303030">currentLong</div>
<div class="t m" style="left:191px;top:81.6px;font-size:18.72px;color:#303030">double</div>
<div class="t m" style="left:529px;top:81.6px;font-size:18.72px;color:#303030">1 x 1</div>
<div class="a" style="left:0;top:103.0px;width:855px;height:25.3px;background:#eeeeee;border-bottom:2px solid #c9c9c9;border-top:2px solid #c9c9c9"></div>
<svg class="a" style="left:15px;top:110.3px" width="11" height="11"><rect x="0.5" y="0.5" width="10" height="10" fill="#f4f4f4" stroke="#9c9c9c"/><path d="M2.5 5.5 H8.5" stroke="#555" stroke-width="1.2"/></svg>
<div class="t m" style="left:32px;top:106.6px;font-size:18.72px;color:#7f98bb;-webkit-text-stroke:0.45px #7f98bb">Output</div>
<div class="a" style="left:0;top:128.3px;width:855px;height:25.2px;background:#fff;border-bottom:1px solid #e9e9e9"></div>
<div class="a" style="left:179px;top:128.3px;width:1px;height:25.2px;background:#ececec"></div>
<div class="a" style="left:517px;top:128.3px;width:1px;height:25.2px;background:#ececec"></div>
<div class="t m" style="left:41px;top:132.1px;font-size:18.72px;color:#303030">nV</div>
<div class="t m" style="left:191px;top:132.1px;font-size:18.72px;color:#303030">double</div>
<div class="t m" style="left:529px;top:132.1px;font-size:18.72px;color:#303030">1 x 1</div>
<div class="a" style="left:0;top:153.5px;width:855px;height:25.2px;background:#fff;border-bottom:1px solid #e9e9e9"></div>
<div class="a" style="left:179px;top:153.5px;width:1px;height:25.2px;background:#ececec"></div>
<div class="a" style="left:517px;top:153.5px;width:1px;height:25.2px;background:#ececec"></div>
<div class="t m" style="left:41px;top:157.3px;font-size:18.72px;color:#303030">eV</div>
<div class="t m" style="left:191px;top:157.3px;font-size:18.72px;color:#303030">double</div>
<div class="t m" style="left:529px;top:157.3px;font-size:18.72px;color:#303030">1 x 1</div>
<div class="a" style="left:0;top:178.7px;width:855px;height:25.2px;background:#fff;border-bottom:1px solid #e9e9e9"></div>
<div class="a" style="left:179px;top:178.7px;width:1px;height:25.2px;background:#ececec"></div>
<div class="a" style="left:517px;top:178.7px;width:1px;height:25.2px;background:#ececec"></div>
<div class="t m" style="left:41px;top:182.5px;font-size:18.72px;color:#303030">aV</div>
<div class="t m" style="left:191px;top:182.5px;font-size:18.72px;color:#303030">double</div>
<div class="t m" style="left:529px;top:182.5px;font-size:18.72px;color:#303030">1 x 1</div>
<div class="a" style="left:0;top:203.9px;width:855px;height:25.2px;background:#fff;border-bottom:1px solid #e9e9e9"></div>
<div class="a" style="left:179px;top:203.9px;width:1px;height:25.2px;background:#ececec"></div>
<div class="a" style="left:517px;top:203.9px;width:1px;height:25.2px;background:#ececec"></div>
<div class="t m" style="left:41px;top:207.7px;font-size:18.72px;color:#303030">alt</div>
<div class="t m" style="left:191px;top:207.7px;font-size:18.72px;color:#303030">double</div>
<div class="t m" style="left:529px;top:207.7px;font-size:18.72px;color:#303030">1 x 1</div>
</div>
<div class="a" style="left:1193px;top:744px;width:18px;height:227px;background:#f0f0f0;border-left:1px solid #e6e6e6"></div>
<svg class="a" style="left:1197.5px;top:751px" width="9" height="6"><polygon points="1,5 4.5,1 8,5" fill="#4a4a4a"/></svg>
<svg class="a" style="left:1197.5px;top:958px" width="9" height="6"><polygon points="1,1 8,1 4.5,5" fill="#4a4a4a"/></svg>
<div class="a" style="left:1194px;top:767px;width:16px;height:100px;border:1px solid #9b9b9b;border-radius:2px;background:linear-gradient(to right,#f0f0f0 0,#e9e9e9 40%,#d6d6d6 70%,#c6c6c6 100%)"></div>
<svg class="a" style="left:1198.0px;top:812.5px" width="9" height="9"><path d="M1 1.5 H7.5 M1 4.5 H7.5 M1 7.5 H7.5" stroke="#555" stroke-width="1"/></svg>
<div class="a" style="left:334px;top:683px;width:4px;height:288px;background:#f0f0f0"></div>
<div class="a" style="left:1211px;top:79px;width:1px;height:892px;background:#9aa4ae"></div>
<div class="a" style="left:8px;top:971px;width:1204px;height:30px;background:linear-gradient(to right,#062a4f 0,#082d55 250px,#0d3866 450px,#12447a 610px,#174f8a 800px,#1a5592 1000px,#1b5794 1204px)"></div>
<svg class="a" style="left:14px;top:974px" width="20" height="26" viewBox="0 0 20 26"><polyline points="15,3 4,13 15,23" fill="none" stroke="#fff" stroke-width="4.2"/></svg>
<div class="t" style="left:39px;top:977px;font-size:20.5px;color:#fff">Back</div>
<div class="t" style="left:1138px;top:977px;font-size:20.5px;color:#dfe7f1;opacity:.8">Next</div>
<svg class="a" style="left:1190px;top:976px" width="18" height="24" viewBox="0 0 18 24"><polyline points="4,2.5 13.5,12 4,21.5" fill="none" stroke="#7cc043" stroke-width="4.6"/></svg>
<svg class="a" style="left:1068px;top:952px" width="150" height="52" viewBox="0 0 150 52">
<path d="M26 16 C 30 12, 31 8, 29 3" stroke="#e3e8ef" stroke-width="1.6" fill="none"/>
<circle cx="22" cy="32" r="17.5" fill="#dfe5ee"/>
<path d="M13.5 28.5 L 27 19 M 30.5 31.5 L 16 43" stroke="#2f4f7c" stroke-width="1.3"/>
<circle cx="11.7" cy="30" r="2.3" fill="#fff" stroke="#2f4f7c" stroke-width="1.3"/>
<circle cx="32.3" cy="30" r="2.3" fill="#fff" stroke="#2f4f7c" stroke-width="1.3"/>
<g fill="none" stroke-linecap="round" stroke-linejoin="round">
<path d="M47 16 H58 V26 H47 Z M47 21 H58 M52.5 13.5 V28 Q52.5 30 55 30 H61 V28 M64 16 H76 L70 21 M70 21 V29 Q70 31 67 30 M63 23 H79 M84 14 L82 20 H96 M87 20 Q86 26 81 31 M86 24 H93 Q90 28 83 31 M88 25 Q92 29 97 31 M92 14 L94 17 M99 16 V30 M97 20 L98 23 M101 19 L102 22 M99 24 L97 30 M104 17 H115 M109 14 V20 M103 21 H116 M106 23 Q106 28 103 31 M111 23 V29 Q111 31 116 30 M118 19 H133 M125 14 Q124 25 117 31 M124 23 H131 Q128 28 120 31 M125 26 Q129 29 134 31" stroke="#34465e" stroke-width="3"/>
<path d="M47 16 H58 V26 H47 Z M47 21 H58 M52.5 13.5 V28 Q52.5 30 55 30 H61 V28 M64 16 H76 L70 21 M70 21 V29 Q70 31 67 30 M63 23 H79 M84 14 L82 20 H96 M87 20 Q86 26 81 31 M86 24 H93 Q90 28 83 31 M88 25 Q92 29 97 31 M92 14 L94 17 M99 16 V30 M97 20 L98 23 M101 19 L102 22 M99 24 L97 30 M104 17 H115 M109 14 V20 M103 21 H116 M106 23 Q106 28 103 31 M111 23 V29 Q111 31 116 30 M118 19 H133 M125 14 Q124 25 117 31 M124 23 H131 Q128 28 120 31 M125 26 Q129 29 134 31" stroke="#ffffff" stroke-width="1.7"/>
</g>
<text x="46" y="44" font-size="10.9" font-weight="bold" font-family="Liberation Sans" fill="#ffffff" stroke="#34465e" stroke-width="0.6" paint-order="stroke" letter-spacing="0">www.elecfans.com</text>
</svg>
</body></html>
